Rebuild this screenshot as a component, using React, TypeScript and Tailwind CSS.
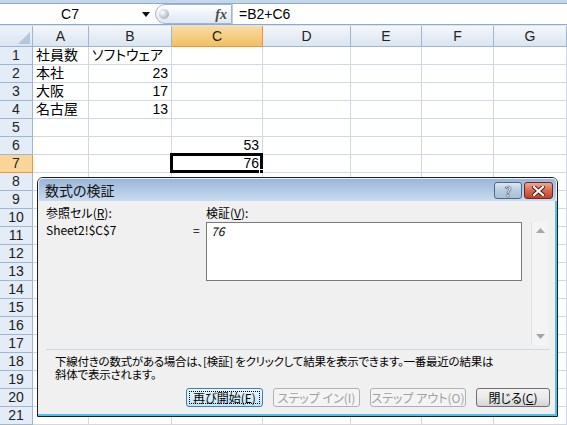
import React from 'react';

const COLS = [
  { key: 'A', w: 56 },
  { key: 'B', w: 83 },
  { key: 'C', w: 91 },
  { key: 'D', w: 88 },
  { key: 'E', w: 71 },
  { key: 'F', w: 72 },
  { key: 'G', w: 73 },
];

type Cell = { v: string; right?: boolean };

const DATA: Record<string, Cell> = {
  A1: { v: '社員数' },
  B1: { v: 'ソフトウェア' },
  A2: { v: '本社' },
  B2: { v: '23', right: true },
  A3: { v: '大阪' },
  B3: { v: '17', right: true },
  A4: { v: '名古屋' },
  B4: { v: '13', right: true },
  C6: { v: '53', right: true },
  C7: { v: '76', right: true },
};

const ROWS = Array.from({ length: 21 }, (_, i) => i + 1);

function FormulaBar() {
  return (
    <div className="flex flex-col h-[26px] bg-[#dbe5f2]">
      <div className="h-[3px] bg-[#c4d7ee]" />
      <div className="flex h-[22px] border-y border-[#8fa9ca] bg-white">
        <div className="relative flex w-[155px] items-center">
          <span className="w-[140px] text-center text-[14px] text-black">C7</span>
          <svg width="8" height="5" viewBox="0 0 8 5" className="ml-[2px]">
            <path d="M0 0 H8 L4 5 Z" fill="#111" />
          </svg>
        </div>
        <div className="flex w-[77px] items-center rounded-l-full border border-[#a2b5cd] bg-gradient-to-b from-[#ffffff] to-[#dfe7f2]">
          <div className="ml-[3px] h-[10px] w-[10px] rounded-full bg-[radial-gradient(circle_at_35%_35%,#ffffff,#b9c3cf_60%,#8e99a7)]" />
          <span className="ml-auto mr-[4px] font-['Liberation_Serif',serif] text-[14px] font-bold italic text-[#4a4a4a]">
            fx
          </span>
        </div>
        <div className="flex flex-1 items-center border-l border-[#c2cfdf] pl-[6px] text-[14px] text-black">
          =B2+C6
        </div>
      </div>
    </div>
  );
}

function Corner() {
  return (
    <div className="relative border-r border-b border-[#9eb6ce] bg-gradient-to-b from-[#eef3fa] to-[#dae4f1]">
      <svg width="12" height="12" viewBox="0 0 12 12" className="absolute right-[2px] bottom-[2px]">
        <path d="M12 0 V12 H0 Z" fill="#b4c6dc" />
      </svg>
    </div>
  );
}

function GridCell({ id }: { id: string }) {
  const cell = DATA[id];
  const selected = id === 'C7';
  return (
    <div
      className={`relative border-r border-b border-[#d0d7e5] bg-white px-[3px] text-[14px] leading-[17px] text-black ${
        cell?.right ? 'text-right' : 'text-left'
      }`}
    >
      {cell?.v}
      {selected && (
        <>
          <div className="absolute -top-[2px] -left-[2px] -right-[1px] -bottom-[1px] border-[3px] border-black" />
          <div className="absolute -right-[4px] -bottom-[4px] h-[7px] w-[7px] border border-white bg-black" />
        </>
      )}
    </div>
  );
}

function Sheet() {
  return (
    <div className="grid grid-cols-[33px_56px_83px_91px_88px_71px_72px_73px] grid-rows-[21px_repeat(21,18px)]">
      <Corner />
      {COLS.map((c) =>
        c.key === 'C' ? (
          <div
            key={c.key}
            className="flex items-center justify-center border-r border-b border-[#f29436] bg-gradient-to-b from-[#f9dba6] to-[#f1c15f] text-[14px] text-[#222]"
          >
            {c.key}
          </div>
        ) : (
          <div
            key={c.key}
            className="flex items-center justify-center border-r border-b border-[#9eb6ce] bg-gradient-to-b from-[#f4f7fb] to-[#dbe4f0] text-[14px] text-[#222]"
          >
            {c.key}
          </div>
        ),
      )}
      {ROWS.map((r) => (
        <React.Fragment key={r}>
          {r === 7 ? (
            <div className="flex items-center justify-center border-r border-b border-[#f29436] bg-[#f9d59a] text-[14px] text-[#222]">
              {r}
            </div>
          ) : (
            <div className="flex items-center justify-center border-r border-b border-[#9eb6ce] bg-[#e4ecf7] text-[14px] text-[#222]">
              {r}
            </div>
          )}
          {COLS.map((c) => (
            <GridCell key={c.key} id={`${c.key}${r}`} />
          ))}
        </React.Fragment>
      ))}
    </div>
  );
}

function TitleButtons() {
  return (
    <div className="ml-auto flex gap-[2px] self-start pt-[3px]">
      <div className="flex h-[17px] w-[28px] items-center justify-center rounded-[3px] border border-[#53677f] bg-gradient-to-b from-[#dbe6f2] via-[#b8cbe2] to-[#a8bfdb]">
        <span className="text-[14px] font-bold leading-none text-white [-webkit-text-stroke:0.6px_#37475c]">?</span>
      </div>
      <div className="flex h-[17px] w-[29px] items-center justify-center rounded-[3px] border border-[#6e2a20] bg-gradient-to-b from-[#e8a898] via-[#d46a52] to-[#c0412a]">
        <svg width="13" height="10" viewBox="0 0 13 10">
          <path d="M2 1 L11 9 M11 1 L2 9" stroke="#4a1a12" strokeWidth="4" strokeLinecap="square" />
          <path d="M2 1 L11 9 M11 1 L2 9" stroke="#ffffff" strokeWidth="2.2" strokeLinecap="square" />
        </svg>
      </div>
    </div>
  );
}

function Scrollbar() {
  return (
    <div className="ml-[9px] flex h-[123px] w-[17px] flex-col items-center justify-between border-l border-[#e3e3e3] bg-[#f4f4f4] py-[6px]">
      <svg width="9" height="5" viewBox="0 0 9 5">
        <path d="M4.5 0 L9 5 H0 Z" fill="#a6a6a6" />
      </svg>
      <svg width="9" height="5" viewBox="0 0 9 5">
        <path d="M0 0 H9 L4.5 5 Z" fill="#a6a6a6" />
      </svg>
    </div>
  );
}

function Button({
  children,
  w,
  focused,
  disabled,
}: {
  children: React.ReactNode;
  w: string;
  focused?: boolean;
  disabled?: boolean;
}) {
  if (disabled) {
    return (
      <div className={`${w} flex h-[19px] items-center justify-center rounded-[3px] border border-[#adb2b5] bg-[#f4f4f4] text-[12px] text-[#a0a0a0]`}>
        {children}
      </div>
    );
  }
  if (focused) {
    return (
      <div className={`${w} flex h-[19px] items-center justify-center rounded-[3px] border border-[#3c7fb1] bg-gradient-to-b from-[#eaf6fd] via-[#d9f0fc] to-[#bee6fd] p-[2px] text-[12px] text-black`}>
        <div className="flex h-full w-full items-center justify-center border border-dotted border-black">
          {children}
        </div>
      </div>
    );
  }
  return (
    <div className={`${w} flex h-[19px] items-center justify-center rounded-[3px] border border-[#707070] bg-gradient-to-b from-[#f2f2f2] via-[#ebebeb] to-[#d4d4d4] text-[12px] text-black`}>
      {children}
    </div>
  );
}

function Dialog() {
  return (
    <div className="absolute left-[37px] top-[177px] flex h-[240px] w-[521px] flex-col rounded-t-[6px] border border-[#1e1e1e] bg-[#f0f0f0] font-['Noto_Sans_CJK_JP',sans-serif] [font-feature-settings:'palt']">
      <div className="flex h-[23px] shrink-0 items-center rounded-t-[5px] border-t border-l border-r border-[#e8f0f9] bg-gradient-to-b from-[#9bb6d9] to-[#c8dcf1] pl-[6px] pr-[3px]">
        <span className="text-[14px] leading-none text-[#111]">数式の検証</span>
        <TitleButtons />
      </div>
      <div className="flex flex-1 flex-col border-r-2 border-b-2 border-[#4fc2ea] pl-[8px] pr-[5px] pt-[4px] text-[12px] text-black">
        <div className="flex">
          <div className="w-[144px]">
            <div className="h-[15px] leading-[15px]">
              参照セル(<span className="underline">R</span>):
            </div>
            <div className="mt-[2px] leading-[15px]">Sheet2!$C$7</div>
          </div>
          <div className="w-[16px] pl-[3px] pt-[17px] leading-[15px]">=</div>
          <div className="flex flex-col">
            <div className="h-[15px] leading-[15px]">
              検証(<span className="underline">V</span>):
            </div>
            <div className="mt-[2px] flex items-start">
              <div className="h-[59px] w-[316px] border border-[#7a7a7a] bg-white pl-[4px] pt-[1px] italic leading-[14px]">
                76
              </div>
              <Scrollbar />
            </div>
          </div>
        </div>
        <div className="mt-[4px] h-[1px] bg-[#cfd8e0]" />
        <div className="ml-[9px] mt-[5px] text-[11.5px] leading-[13px] tracking-[-0.25px]">
          <div>下線付きの数式がある場合は、[検証] をクリックして結果を表示できます。一番最近の結果は</div>
          <div>斜体で表示されます。</div>
        </div>
        <div className="mt-[7px] flex justify-end gap-[10px]">
          <Button w="w-[77px]" focused>
            再び開始(E)
          </Button>
          <Button w="w-[87px]" disabled>
            ステップ イン(I)
          </Button>
          <Button w="w-[96px]" disabled>
            ステップ アウト(O)
          </Button>
          <Button w="w-[74px]">
            閉じる(<span className="underline">C</span>)
          </Button>
        </div>
      </div>
    </div>
  );
}

export default function App() {
  return (
    <div className="relative h-[425px] w-[567px] overflow-hidden bg-white font-['Liberation_Sans','Noto_Sans_CJK_JP',sans-serif] [font-feature-settings:'palt']">
      <FormulaBar />
      <Sheet />
      <Dialog />
    </div>
  );
}
